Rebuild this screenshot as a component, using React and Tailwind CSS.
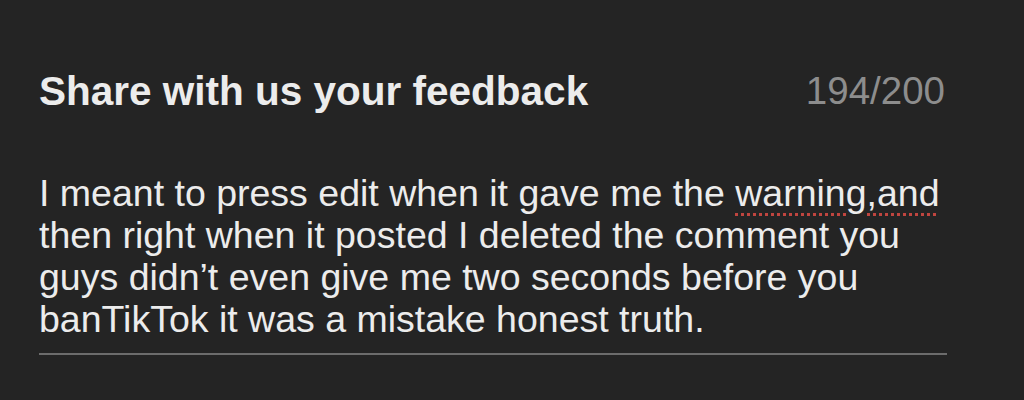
export default function App() {
  const font = { fontFamily: '"Liberation Sans", Arial, sans-serif' };
  return (
    <div className="w-[1024px] h-[400px] overflow-hidden bg-[#242424]" style={font}>
      <div className="pl-[39px] pr-[77px] pt-[70px]">
        <div className="flex items-center justify-between h-[42px]">
          <h1 className="text-[40.5px] leading-[42px] font-bold text-[#ececec]">Share with us your feedback</h1>
          <span className="text-[38.5px] leading-[42px] text-[#8d8d8d] mr-[2px]">194/200</span>
        </div>
        <div className="mt-[60px] text-[37.5px] leading-[42px] text-[#ececec] whitespace-nowrap">
          <div>
            I meant to press edit when it gave me the{' '}
            <span className="underline decoration-dotted decoration-[#c0453f] decoration-[3px] underline-offset-[7px]">warning,and</span>
          </div>
          <div>then right when it posted I deleted the comment you</div>
          <div>guys didn’t even give me two seconds before you</div>
          <div>banTikTok it was a mistake honest truth.</div>
        </div>
        <div className="mt-[13px] h-[2px] bg-[#6c6c6c]" />
        <div className="mt-[38px] pl-[56px] text-[37.5px] leading-[42px] text-[#ececec] whitespace-nowrap">
          Which of these options best describe you?
        </div>
      </div>
    </div>
  );
}
